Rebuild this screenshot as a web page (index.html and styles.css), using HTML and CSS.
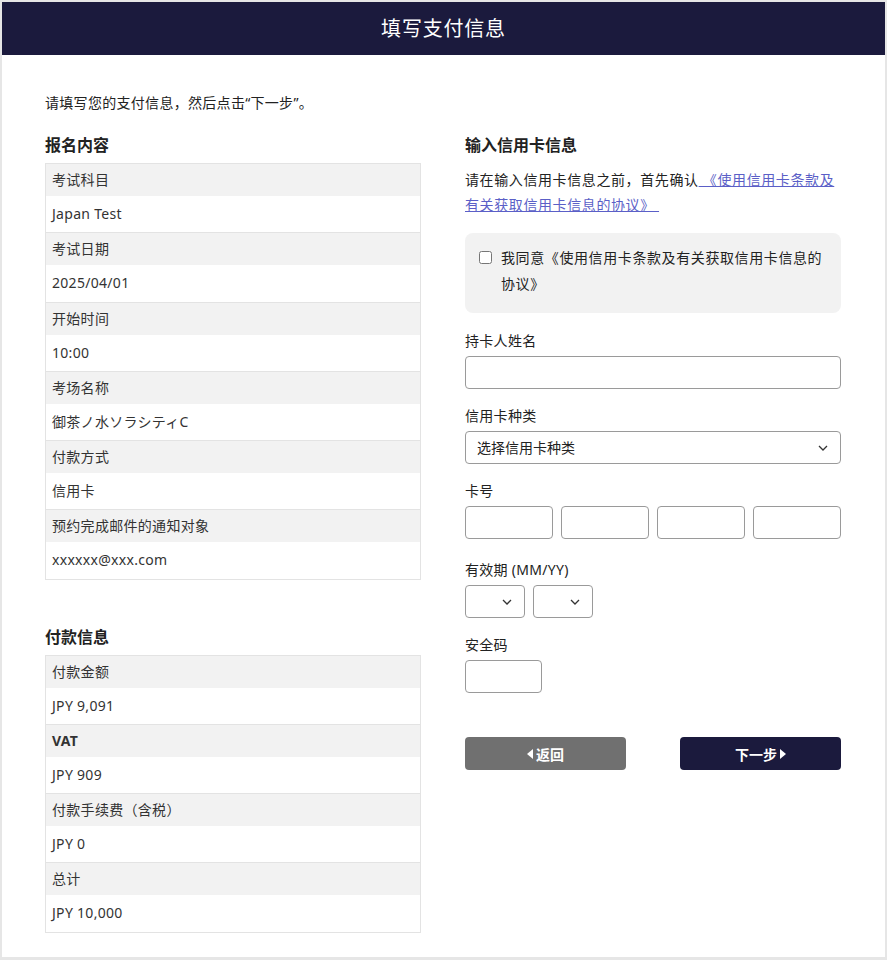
FILE: index.html
```html
<!DOCTYPE html>
<html lang="zh-CN">
<head>
<meta charset="utf-8">
<title>填写支付信息</title>
<link rel="stylesheet" href="styles.css">
</head>
<body>
<div class="card">
  <header class="topbar"><h1>填写支付信息</h1></header>
  <main class="content">
    <p class="intro">请填写您的支付信息，然后点击“下一步”。</p>
    <div class="columns">
      <section class="left">
        <h2 class="section-title">报名内容</h2>
        <div class="info-table">
          <div class="pair"><div class="row-label">考试科目</div><div class="row-value">Japan Test</div></div>
          <div class="pair"><div class="row-label">考试日期</div><div class="row-value">2025/04/01</div></div>
          <div class="pair"><div class="row-label">开始时间</div><div class="row-value">10:00</div></div>
          <div class="pair"><div class="row-label">考场名称</div><div class="row-value">御茶ノ水ソラシティC</div></div>
          <div class="pair"><div class="row-label">付款方式</div><div class="row-value">信用卡</div></div>
          <div class="pair"><div class="row-label">预约完成邮件的通知对象</div><div class="row-value">xxxxxx@xxx.com</div></div>
        </div>
        <h2 class="section-title second">付款信息</h2>
        <div class="info-table">
          <div class="pair"><div class="row-label">付款金额</div><div class="row-value">JPY 9,091</div></div>
          <div class="pair"><div class="row-label bold">VAT</div><div class="row-value">JPY 909</div></div>
          <div class="pair"><div class="row-label">付款手续费（含税）</div><div class="row-value">JPY 0</div></div>
          <div class="pair"><div class="row-label">总计</div><div class="row-value">JPY 10,000</div></div>
        </div>
      </section>
      <section class="right">
        <h2 class="section-title">输入信用卡信息</h2>
        <p class="notice">请在输入信用卡信息之前，首先确认<a href="#" class="terms-link">&nbsp;《使用信用卡条款及有关获取信用卡信息的协议》&nbsp;</a></p>
        <label class="agree">
          <input type="checkbox" class="agree-check">
          <span>我同意《使用信用卡条款及有关获取信用卡信息的协议》</span>
        </label>
        <div class="field">
          <div class="field-label">持卡人姓名</div>
          <input type="text" class="text-input full">
        </div>
        <div class="field">
          <div class="field-label">信用卡种类</div>
          <div class="select-wrap full">
            <select class="select-input"><option>选择信用卡种类</option></select>
            <svg class="chev" width="10" height="6" viewBox="0 0 10 6"><path d="M1 1 L5 5 L9 1" fill="none" stroke="#333" stroke-width="1.3"/></svg>
          </div>
        </div>
        <div class="field">
          <div class="field-label">卡号</div>
          <div class="card-number">
            <input type="text" class="text-input">
            <input type="text" class="text-input">
            <input type="text" class="text-input">
            <input type="text" class="text-input">
          </div>
        </div>
        <div class="field expiry">
          <div class="field-label">有效期 (MM/YY)</div>
          <div class="expiry-row">
            <div class="select-wrap small">
              <select class="select-input"><option></option></select>
              <svg class="chev" width="10" height="6" viewBox="0 0 10 6"><path d="M1 1 L5 5 L9 1" fill="none" stroke="#333" stroke-width="1.3"/></svg>
            </div>
            <div class="select-wrap small">
              <select class="select-input"><option></option></select>
              <svg class="chev" width="10" height="6" viewBox="0 0 10 6"><path d="M1 1 L5 5 L9 1" fill="none" stroke="#333" stroke-width="1.3"/></svg>
            </div>
          </div>
        </div>
        <div class="field">
          <div class="field-label">安全码</div>
          <input type="text" class="text-input cvv">
        </div>
        <div class="actions">
          <button class="btn btn-back" type="button"><svg width="6" height="10" viewBox="0 0 6 10"><path d="M6 0 L6 10 L0 5 Z" fill="#fff"/></svg>返回</button>
          <button class="btn btn-next" type="button">下一步<svg width="6" height="10" viewBox="0 0 6 10"><path d="M0 0 L0 10 L6 5 Z" fill="#fff"/></svg></button>
        </div>
      </section>
    </div>
  </main>
</div>
</body>
</html>
```
FILE: styles.css
```css
* { box-sizing: border-box; }
html, body { margin: 0; padding: 0; }
body {
  background: #e6e6e6;
  padding: 2px 2px 3px 2px;
  font-family: "Noto Sans", "Noto Sans CJK SC", sans-serif;
  font-size: 14px;
  color: #222;
  letter-spacing: 0.3px;
}
.card {
  background: #fff;
  height: 955px;
}
.topbar {
  background: #1b1a3d;
  height: 53px;
  display: flex;
  align-items: center;
  justify-content: center;
}
.topbar h1 {
  margin: 0;
  font-size: 20px;
  font-weight: 400;
  color: #fff;
  letter-spacing: 0.8px;
  line-height: 28px;
}
.content {
  padding: 38px 44px 0 43px;
}
.intro {
  margin: 0 0 21px 0;
  line-height: 20px;
}
.columns {
  display: grid;
  grid-template-columns: 376px 376px;
  column-gap: 44px;
}
.section-title {
  margin: 0 0 7px 0;
  font-size: 16px;
  font-weight: 700;
  line-height: 22px;
  letter-spacing: 0;
}
.section-title.second { margin-top: 46px; }
.info-table {
  border: 1px solid #e3e3e3;
}
.pair + .pair { border-top: 1px solid #e3e3e3; }
.row-label {
  background: #f2f2f2;
  height: 32px;
  line-height: 32px;
  padding: 0 6px;
  color: #333;
}
.row-label.bold { font-weight: 700; }
.row-value {
  height: 36.25px;
  line-height: 36px;
  padding: 0 6px;
  color: #333;
}
.notice {
  margin: 11px 0 0 0;
  line-height: 25px;
  letter-spacing: 0.6px;
}
.terms-link {
  color: #5b5fc7;
  text-decoration: underline;
}
.agree {
  margin-top: 16px;
  background: #f2f2f2;
  border-radius: 8px;
  padding: 12px 14px 16px 14px;
  display: flex;
  align-items: flex-start;
  gap: 9px;
  line-height: 26px;
  letter-spacing: 0.6px;
}
.agree-check {
  margin: 6px 0 0 0;
  width: 13px;
  height: 13px;
  flex: none;
}
.field { margin-top: 17px; }
.agree + .field { margin-top: 18px; }
.field.expiry { margin-top: 21px; }
.field-label {
  line-height: 20px;
  margin-bottom: 5px;
}
.text-input {
  display: block;
  height: 33px;
  border: 1px solid #9a9a9a;
  border-radius: 4px;
  background: #fff;
  font: inherit;
  padding: 0 10px;
}
.full { width: 376px; }
.card-number {
  display: flex;
  gap: 8px;
}
.card-number .text-input { width: 88px; }
.cvv { width: 77px; }
.select-wrap {
  position: relative;
  height: 33px;
}
.select-wrap.small { width: 60px; }
.select-input {
  appearance: none;
  -webkit-appearance: none;
  width: 100%;
  height: 33px;
  border: 1px solid #9a9a9a;
  border-radius: 4px;
  background: #fff;
  font: inherit;
  color: #222;
  padding: 0 30px 0 11px;
}
.chev {
  position: absolute;
  right: 13px;
  top: 14px;
  pointer-events: none;
}
.expiry-row {
  display: flex;
  gap: 8px;
}
.actions {
  margin-top: 44px;
  display: flex;
  justify-content: space-between;
}
.btn {
  width: 161px;
  height: 33px;
  border: none;
  border-radius: 4px;
  color: #fff;
  font: inherit;
  font-weight: 700;
  display: flex;
  align-items: center;
  justify-content: center;
  gap: 3px;
  letter-spacing: 0;
}
.btn-back { background: #707070; }
.btn-next { background: #1b1a3d; }
```
